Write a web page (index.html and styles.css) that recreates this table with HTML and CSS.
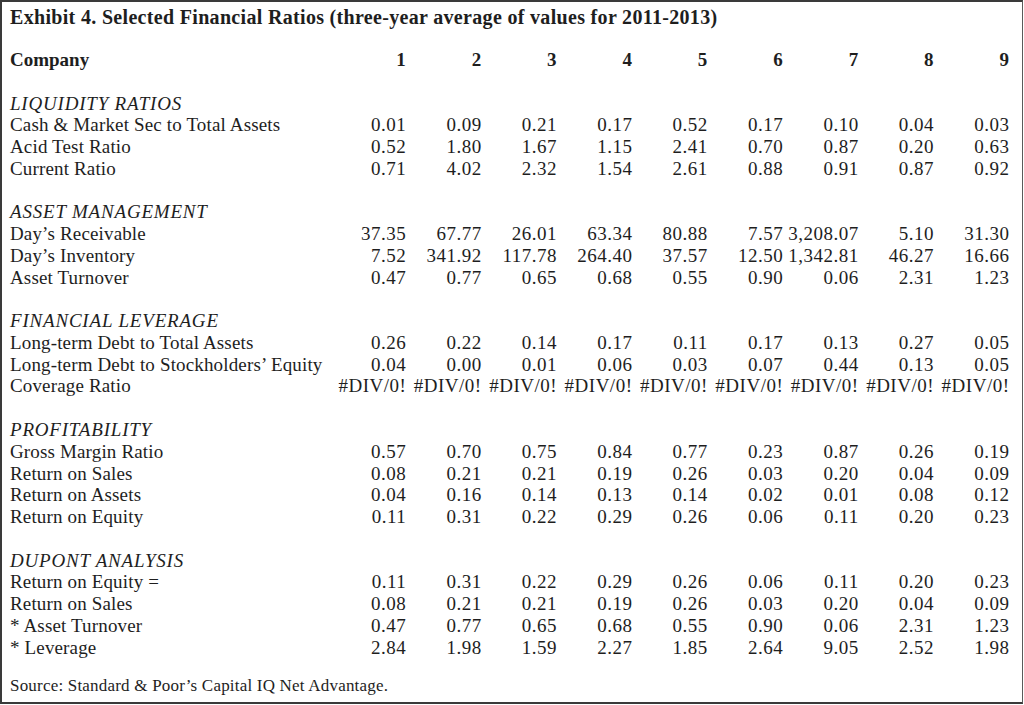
FILE: index.html
```html
<!DOCTYPE html>
<html>
<head>
<meta charset="utf-8">
<link rel="stylesheet" href="styles.css">
</head>
<body>
<div class="exhibit">
  <div class="title">Exhibit 4. Selected Financial Ratios (three-year average of values for 2011-2013)</div>
  <table class="ratios">
    <colgroup>
      <col class="label-col">
      <col class="num-col"><col class="num-col"><col class="num-col"><col class="num-col"><col class="num-col"><col class="num-col"><col class="num-col"><col class="num-col"><col class="num-col">
    </colgroup>
    <thead>
      <tr class="head"><th class="label">Company</th><th>1</th><th>2</th><th>3</th><th>4</th><th>5</th><th>6</th><th>7</th><th>8</th><th>9</th></tr>
    </thead>
    <tbody>
      <tr class="blank"><td colspan="10"></td></tr>
      <tr class="section"><td colspan="10">LIQUIDITY RATIOS</td></tr>
      <tr><td class="label">Cash &amp; Market Sec to Total Assets</td><td>0.01</td><td>0.09</td><td>0.21</td><td>0.17</td><td>0.52</td><td>0.17</td><td>0.10</td><td>0.04</td><td>0.03</td></tr>
      <tr><td class="label">Acid Test Ratio</td><td>0.52</td><td>1.80</td><td>1.67</td><td>1.15</td><td>2.41</td><td>0.70</td><td>0.87</td><td>0.20</td><td>0.63</td></tr>
      <tr><td class="label">Current Ratio</td><td>0.71</td><td>4.02</td><td>2.32</td><td>1.54</td><td>2.61</td><td>0.88</td><td>0.91</td><td>0.87</td><td>0.92</td></tr>
      <tr class="blank"><td colspan="10"></td></tr>
      <tr class="section"><td colspan="10">ASSET MANAGEMENT</td></tr>
      <tr><td class="label">Day’s Receivable</td><td>37.35</td><td>67.77</td><td>26.01</td><td>63.34</td><td>80.88</td><td>7.57</td><td>3,208.07</td><td>5.10</td><td>31.30</td></tr>
      <tr><td class="label">Day’s Inventory</td><td>7.52</td><td>341.92</td><td>117.78</td><td>264.40</td><td>37.57</td><td>12.50</td><td>1,342.81</td><td>46.27</td><td>16.66</td></tr>
      <tr><td class="label">Asset Turnover</td><td>0.47</td><td>0.77</td><td>0.65</td><td>0.68</td><td>0.55</td><td>0.90</td><td>0.06</td><td>2.31</td><td>1.23</td></tr>
      <tr class="blank"><td colspan="10"></td></tr>
      <tr class="section"><td colspan="10">FINANCIAL LEVERAGE</td></tr>
      <tr><td class="label">Long-term Debt to Total Assets</td><td>0.26</td><td>0.22</td><td>0.14</td><td>0.17</td><td>0.11</td><td>0.17</td><td>0.13</td><td>0.27</td><td>0.05</td></tr>
      <tr><td class="label">Long-term Debt to Stockholders’ Equity</td><td>0.04</td><td>0.00</td><td>0.01</td><td>0.06</td><td>0.03</td><td>0.07</td><td>0.44</td><td>0.13</td><td>0.05</td></tr>
      <tr><td class="label">Coverage Ratio</td><td>#DIV/0!</td><td>#DIV/0!</td><td>#DIV/0!</td><td>#DIV/0!</td><td>#DIV/0!</td><td>#DIV/0!</td><td>#DIV/0!</td><td>#DIV/0!</td><td>#DIV/0!</td></tr>
      <tr class="blank"><td colspan="10"></td></tr>
      <tr class="section"><td colspan="10">PROFITABILITY</td></tr>
      <tr><td class="label">Gross Margin Ratio</td><td>0.57</td><td>0.70</td><td>0.75</td><td>0.84</td><td>0.77</td><td>0.23</td><td>0.87</td><td>0.26</td><td>0.19</td></tr>
      <tr><td class="label">Return on Sales</td><td>0.08</td><td>0.21</td><td>0.21</td><td>0.19</td><td>0.26</td><td>0.03</td><td>0.20</td><td>0.04</td><td>0.09</td></tr>
      <tr><td class="label">Return on Assets</td><td>0.04</td><td>0.16</td><td>0.14</td><td>0.13</td><td>0.14</td><td>0.02</td><td>0.01</td><td>0.08</td><td>0.12</td></tr>
      <tr><td class="label">Return on Equity</td><td>0.11</td><td>0.31</td><td>0.22</td><td>0.29</td><td>0.26</td><td>0.06</td><td>0.11</td><td>0.20</td><td>0.23</td></tr>
      <tr class="blank"><td colspan="10"></td></tr>
      <tr class="section"><td colspan="10">DUPONT ANALYSIS</td></tr>
      <tr><td class="label">Return on Equity =</td><td>0.11</td><td>0.31</td><td>0.22</td><td>0.29</td><td>0.26</td><td>0.06</td><td>0.11</td><td>0.20</td><td>0.23</td></tr>
      <tr><td class="label">Return on Sales</td><td>0.08</td><td>0.21</td><td>0.21</td><td>0.19</td><td>0.26</td><td>0.03</td><td>0.20</td><td>0.04</td><td>0.09</td></tr>
      <tr><td class="label">* Asset Turnover</td><td>0.47</td><td>0.77</td><td>0.65</td><td>0.68</td><td>0.55</td><td>0.90</td><td>0.06</td><td>2.31</td><td>1.23</td></tr>
      <tr><td class="label">* Leverage</td><td>2.84</td><td>1.98</td><td>1.59</td><td>2.27</td><td>1.85</td><td>2.64</td><td>9.05</td><td>2.52</td><td>1.98</td></tr>
    </tbody>
  </table>
  <div class="source">Source: Standard &amp; Poor’s Capital IQ Net Advantage.</div>
</div>
</body>
</html>
```

FILE: styles.css
```css
html, body {
  margin: 0;
  padding: 0;
  background: #ffffff;
}

.exhibit {
  box-sizing: border-box;
  width: 1023px;
  height: 704px;
  border-top: 2px solid #3a3a3a;
  border-bottom: 2px solid #3a3a3a;
  border-left: 2px solid #3a3a3a;
  border-right: 1px solid #5a5a5a;
  padding: 5px 13px 0 8px;
  font-family: "Liberation Serif", "Times New Roman", serif;
  font-size: 19px;
  color: #1e1e1e;
}

.title {
  font-weight: bold;
  font-size: 20px;
  letter-spacing: 0.32px;
  line-height: 21.76px;
  margin-bottom: 20.26px;
}

.ratios {
  width: 999.5px;
  border-collapse: collapse;
  table-layout: fixed;
}

.label-col { width: 320.9px; }
.num-col { width: 75.4px; }

.ratios th,
.ratios td {
  padding: 0;
  height: 21.76px;
  line-height: 21.76px;
  text-align: right;
  white-space: nowrap;
  font-weight: normal;
  letter-spacing: 0.5px;
}

.ratios .head th {
  font-weight: bold;
  letter-spacing: 0;
}

.ratios .head th:not(.label) {
  padding-right: 0.5px;
}

.ratios .label {
  text-align: left;
  letter-spacing: 0.15px;
}

.ratios .section td {
  text-align: left;
  font-style: italic;
  letter-spacing: 0.8px;
}

.source {
  font-size: 17px;
  letter-spacing: 0.2px;
  line-height: 20px;
  margin-top: 17.5px;
}
```
